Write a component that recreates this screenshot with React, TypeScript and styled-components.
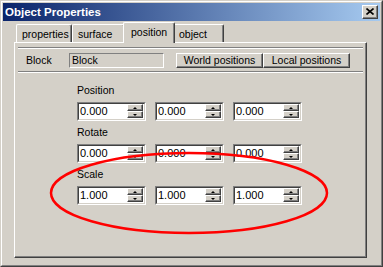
import React from "react";
import styled, { createGlobalStyle } from "styled-components";

const Global = createGlobalStyle`
  html, body { margin: 0; padding: 0; background: #d4d0c8; }
  body {
    font-family: "Liberation Sans", Arial, sans-serif;
    font-size: 10.5px;
    color: #000;
  }
`;

const Window = styled.div`
  position: relative;
  width: 383px;
  height: 267px;
  box-sizing: border-box;
  border: 1px solid;
  border-color: #d4d0c8 #404040 #404040 #d4d0c8;
  background: #d4d0c8;
  overflow: hidden;
`;

const Frame = styled.div`
  height: 100%;
  box-sizing: border-box;
  border: 1px solid;
  border-color: #ffffff #808080 #808080 #ffffff;
  padding: 1px;
  display: flex;
  flex-direction: column;
`;

const TitleBar = styled.div`
  flex: none;
  height: 18px;
  display: flex;
  align-items: center;
  justify-content: space-between;
  padding: 0 2px;
  background: linear-gradient(to right, #0a246a, #a6caf0);
  color: #ffffff;
  font-weight: bold;
  font-size: 11.5px;
`;

const CloseButton = styled.div`
  width: 16px;
  height: 14px;
  box-sizing: border-box;
  border: 1px solid;
  border-color: #ffffff #404040 #404040 #ffffff;
  box-shadow: inset -1px -1px 0 #808080;
  background: #d4d0c8;
  display: flex;
  align-items: center;
  justify-content: center;
  padding: 0 1px 1px 0;
`;

const Client = styled.div`
  flex: 1;
  padding: 1px 0 0 11px;
  display: flex;
  flex-direction: column;
`;

const TabStrip = styled.div`
  display: flex;
  align-items: flex-end;
  height: 20px;
  padding-left: 2px;
`;

const Tab = styled.div<{ $w: number; $active?: boolean }>`
  position: relative;
  z-index: ${(p) => (p.$active ? 2 : 1)};
  box-sizing: border-box;
  width: ${(p) => p.$w + (p.$active ? 4 : 0)}px;
  height: ${(p) => (p.$active ? 21 : 18)}px;
  margin: 0 ${(p) => (p.$active ? -2 : 0)}px ${(p) => (p.$active ? -1 : 0)}px;
  padding: 0 0 ${(p) => (p.$active ? 3 : 0)}px ${(p) => (p.$active ? 7 : 5)}px;
  border-top: 1px solid #ffffff;
  border-left: 1px solid #ffffff;
  border-right: 1px solid #404040;
  border-radius: 2px 2px 0 0;
  box-shadow: inset -1px 0 0 #808080;
  background: #d4d0c8;
  display: flex;
  align-items: center;
  white-space: nowrap;
  overflow: hidden;
`;

const Panel = styled.div`
  position: relative;
  width: 353px;
  height: 216px;
  box-sizing: border-box;
  border: 1px solid;
  border-color: #ffffff #404040 #404040 #ffffff;
  box-shadow: inset -1px -1px 0 #808080;
  padding: 4px 3px 0 3px;
`;

const Strip = styled.div`
  height: 26px;
  box-sizing: border-box;
  border-top: 1px solid #808080;
  border-bottom: 1px solid #ffffff;
  box-shadow: inset 0 1px 0 #ffffff, inset 0 -1px 0 #808080;
  display: flex;
  align-items: center;
  padding-left: 8px;
`;

const StripLabel = styled.div`
  width: 43px;
`;

const ReadField = styled.div`
  width: 95px;
  height: 15px;
  box-sizing: border-box;
  border: 1px solid;
  border-color: #808080 #ffffff #ffffff #808080;
  padding-left: 2px;
  line-height: 13px;
  margin-right: 12px;
`;

const PushButton = styled.div`
  width: 87px;
  height: 15px;
  box-sizing: border-box;
  border: 1px solid;
  border-color: #ffffff #404040 #404040 #ffffff;
  box-shadow: inset -1px -1px 0 #808080;
  text-align: center;
  line-height: 12px;
`;

const Sections = styled.div`
  padding: 11px 0 0 59px;
  display: flex;
  flex-direction: column;
  gap: 5px;
`;

const Section = styled.div`
  display: flex;
  flex-direction: column;
`;

const SectionLabel = styled.div`
  line-height: 13px;
  margin-bottom: 5px;
`;

const Row = styled.div`
  display: flex;
  gap: 9px;
`;

const SpinBox = styled.div`
  width: 69px;
  height: 19px;
  box-sizing: border-box;
  border: 1px solid;
  border-color: #808080 #ffffff #ffffff #808080;
  display: flex;
`;

const SpinInner = styled.div`
  flex: 1;
  display: flex;
  border: 1px solid;
  border-color: #404040 #d4d0c8 #d4d0c8 #404040;
  background: #ffffff;
  padding-right: 1px;
`;

const SpinValue = styled.div`
  flex: 1;
  padding-left: 1px;
  line-height: 15px;
  font-size: 11px;
`;

const SpinColumn = styled.div`
  width: 16px;
  display: flex;
  flex-direction: column;
  padding-bottom: 1px;
`;

const SpinButton = styled.div<{ $down?: boolean }>`
  height: 7px;
  box-sizing: border-box;
  border: 1px solid;
  border-color: #ffffff #404040 #404040 #ffffff;
  box-shadow: inset -1px -1px 0 #808080;
  background: #d4d0c8;
  display: flex;
  align-items: center;
  justify-content: center;
  padding-right: 1px;
  &::after {
    content: "";
    width: 0;
    height: 0;
    border-left: 2px solid transparent;
    border-right: 2px solid transparent;
    ${(p) =>
      p.$down
        ? "border-top: 2px solid #000;"
        : "border-bottom: 2px solid #000;"}
  }
`;

const Overlay = styled.svg`
  position: absolute;
  top: -1px;
  left: -1px;
  pointer-events: none;
  z-index: 10;
`;

const tabs = [
  { label: "properties", w: 56 },
  { label: "surface", w: 53 },
  { label: "position", w: 48, active: true },
  { label: "object", w: 51 },
];

const sections = [
  { label: "Position", values: ["0.000", "0.000", "0.000"] },
  { label: "Rotate", values: ["0.000", "0.000", "0.000"] },
  { label: "Scale", values: ["1.000", "1.000", "1.000"] },
];

const Spin: React.FC<{ value: string }> = ({ value }) => (
  <SpinBox>
    <SpinInner>
      <SpinValue>{value}</SpinValue>
      <SpinColumn>
        <SpinButton />
        <SpinButton $down />
      </SpinColumn>
    </SpinInner>
  </SpinBox>
);

export default function App() {
  return (
    <>
      <Global />
      <Window>
        <Frame>
          <TitleBar>
            <span>Object Properties</span>
            <CloseButton>
              <svg width="8" height="7" viewBox="0 0 8 7">
                <path d="M0.5 0.5 L7.5 6.5 M7.5 0.5 L0.5 6.5" stroke="#000" strokeWidth="1.6" fill="none" />
              </svg>
            </CloseButton>
          </TitleBar>
          <Client>
            <TabStrip>
              {tabs.map((t) => (
                <Tab key={t.label} $w={t.w} $active={t.active}>
                  {t.label}
                </Tab>
              ))}
            </TabStrip>
            <Panel>
              <Strip>
                <StripLabel>Block</StripLabel>
                <ReadField>Block</ReadField>
                <PushButton>World positions</PushButton>
                <PushButton>Local positions</PushButton>
              </Strip>
              <Sections>
                {sections.map((s) => (
                  <Section key={s.label}>
                    <SectionLabel>{s.label}</SectionLabel>
                    <Row>
                      {s.values.map((v, i) => (
                        <Spin key={i} value={v} />
                      ))}
                    </Row>
                  </Section>
                ))}
              </Sections>
            </Panel>
          </Client>
        </Frame>
        <Overlay width="383" height="267" viewBox="0 0 383 267">
          <ellipse cx="189" cy="193" rx="138" ry="40" fill="none" stroke="#ff0000" strokeWidth="2.5" />
        </Overlay>
      </Window>
    </>
  );
}
